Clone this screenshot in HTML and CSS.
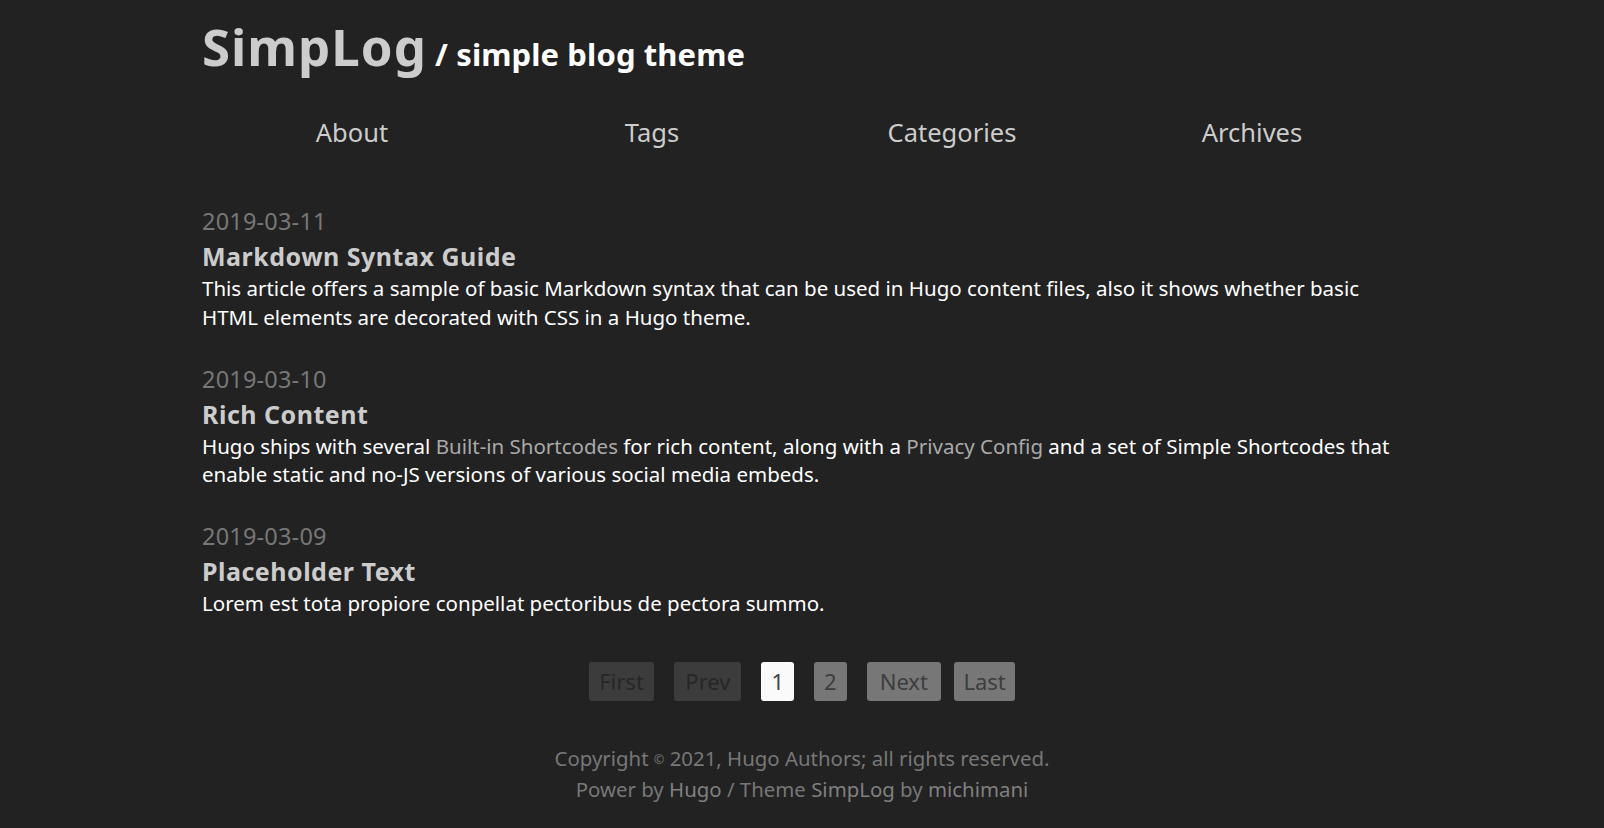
FILE: index.html
```html
<!DOCTYPE html>
<html lang="en">
<head>
<meta charset="utf-8">
<title>SimpLog</title>
<link rel="stylesheet" href="styles.css">
</head>
<body>
<div class="wrap">
  <header class="site-header">
    <h1 class="site-title"><a class="site-name" href="#">SimpLog</a><span class="site-desc"> / simple blog theme</span></h1>
    <nav class="site-nav">
      <a href="#" class="nav-item">About</a>
      <a href="#" class="nav-item">Tags</a>
      <a href="#" class="nav-item">Categories</a>
      <a href="#" class="nav-item">Archives</a>
    </nav>
  </header>

  <main class="posts">
    <article class="post">
      <div class="post-date">2019-03-11</div>
      <h2 class="post-title"><a href="#">Markdown Syntax Guide</a></h2>
      <p class="post-summary">This article offers a sample of basic Markdown syntax that can be used in Hugo content files, also it shows whether basic HTML elements are decorated with CSS in a Hugo theme.</p>
    </article>
    <article class="post">
      <div class="post-date">2019-03-10</div>
      <h2 class="post-title"><a href="#">Rich Content</a></h2>
      <p class="post-summary">Hugo ships with several <a href="#" class="inline-link">Built-in Shortcodes</a> for rich content, along with a <a href="#" class="inline-link">Privacy Config</a> and a set of Simple Shortcodes that enable static and no-JS versions of various social media embeds.</p>
    </article>
    <article class="post">
      <div class="post-date">2019-03-09</div>
      <h2 class="post-title"><a href="#">Placeholder Text</a></h2>
      <p class="post-summary">Lorem est tota propiore conpellat pectoribus de pectora summo.</p>
    </article>
  </main>

  <nav class="pagination">
    <span class="page page-first disabled">First</span>
    <span class="page page-prev disabled">Prev</span>
    <span class="page current">1</span>
    <a href="#" class="page">2</a>
    <a href="#" class="page page-next">Next</a>
    <a href="#" class="page page-last">Last</a>
  </nav>

  <footer class="site-footer">
    <p class="footer-line">Copyright <span class="copy-sign">©</span> 2021, Hugo Authors; all rights reserved.</p>
    <p class="footer-line">Power by <a href="#" class="footer-link">Hugo</a> / Theme <a href="#" class="footer-link">SimpLog</a> by <a href="#" class="footer-link">michimani</a></p>
  </footer>
</div>
</body>
</html>
```
FILE: styles.css
```css
html, body {
  margin: 0;
  padding: 0;
  background: #222222;
}

body {
  font-family: "Noto Sans", "Open Sans", sans-serif;
  color: #ffffff;
}

a {
  text-decoration: none;
  color: inherit;
}

.wrap {
  width: 1200px;
  margin: 0 auto;
  padding-top: 16px;
}

/* header */
.site-title {
  margin: 0;
  font-size: 51px;
  line-height: 60px;
  font-weight: 700;
  white-space: nowrap;
}

.site-name {
  color: #cccccc;
  letter-spacing: 1px;
}

.site-desc {
  font-size: 31px;
  line-height: 1;
  letter-spacing: 0.1px;
  color: #ffffff;
}

.site-nav {
  display: grid;
  grid-template-columns: repeat(4, 1fr);
  margin-top: 38px;
}

.nav-item {
  text-align: center;
  font-size: 25.5px;
  line-height: 36px;
  color: #cccccc;
}

/* posts */
.posts {
  margin-top: 54px;
  display: flex;
  flex-direction: column;
  gap: 30.5px;
}

.post-date {
  font-size: 23.5px;
  line-height: 34px;
  letter-spacing: 0.2px;
  color: #777777;
}

.post-title {
  margin: 0;
  font-size: 25px;
  line-height: 36px;
  letter-spacing: 0.5px;
  font-weight: 700;
  color: #cccccc;
}

.post-summary {
  margin: 0;
  font-size: 20.5px;
  line-height: 28.6px;
  color: #ffffff;
}

.inline-link {
  color: #aaaaaa;
}

/* pagination */
.pagination {
  display: flex;
  justify-content: center;
  gap: 20px;
  margin-top: 44px;
}

.page {
  display: block;
  height: 39px;
  padding: 0 10px;
  border-radius: 3px;
  font-size: 22px;
  line-height: 39px;
  background: #777777;
  color: #3d3d3d;
}

.page.disabled {
  background: #3c3c3c;
  color: #262626;
}

.page.current {
  background: #fafafa;
  color: #444444;
}

.page-first {
  padding: 0 10.5px;
}

.page-prev {
  padding: 0 11px;
}

.page-next {
  padding: 0 13px;
}

.page-last {
  padding: 0 9.5px;
  margin-left: -7px;
}

/* footer */
.site-footer {
  margin-top: 42px;
  text-align: center;
  color: #777777;
}

.footer-line {
  margin: 0;
  font-size: 20.4px;
  line-height: 30px;
}

.copy-sign {
  font-size: 0.62em;
  vertical-align: 0.15em;
}

.footer-link {
  color: #808080;
}
```
